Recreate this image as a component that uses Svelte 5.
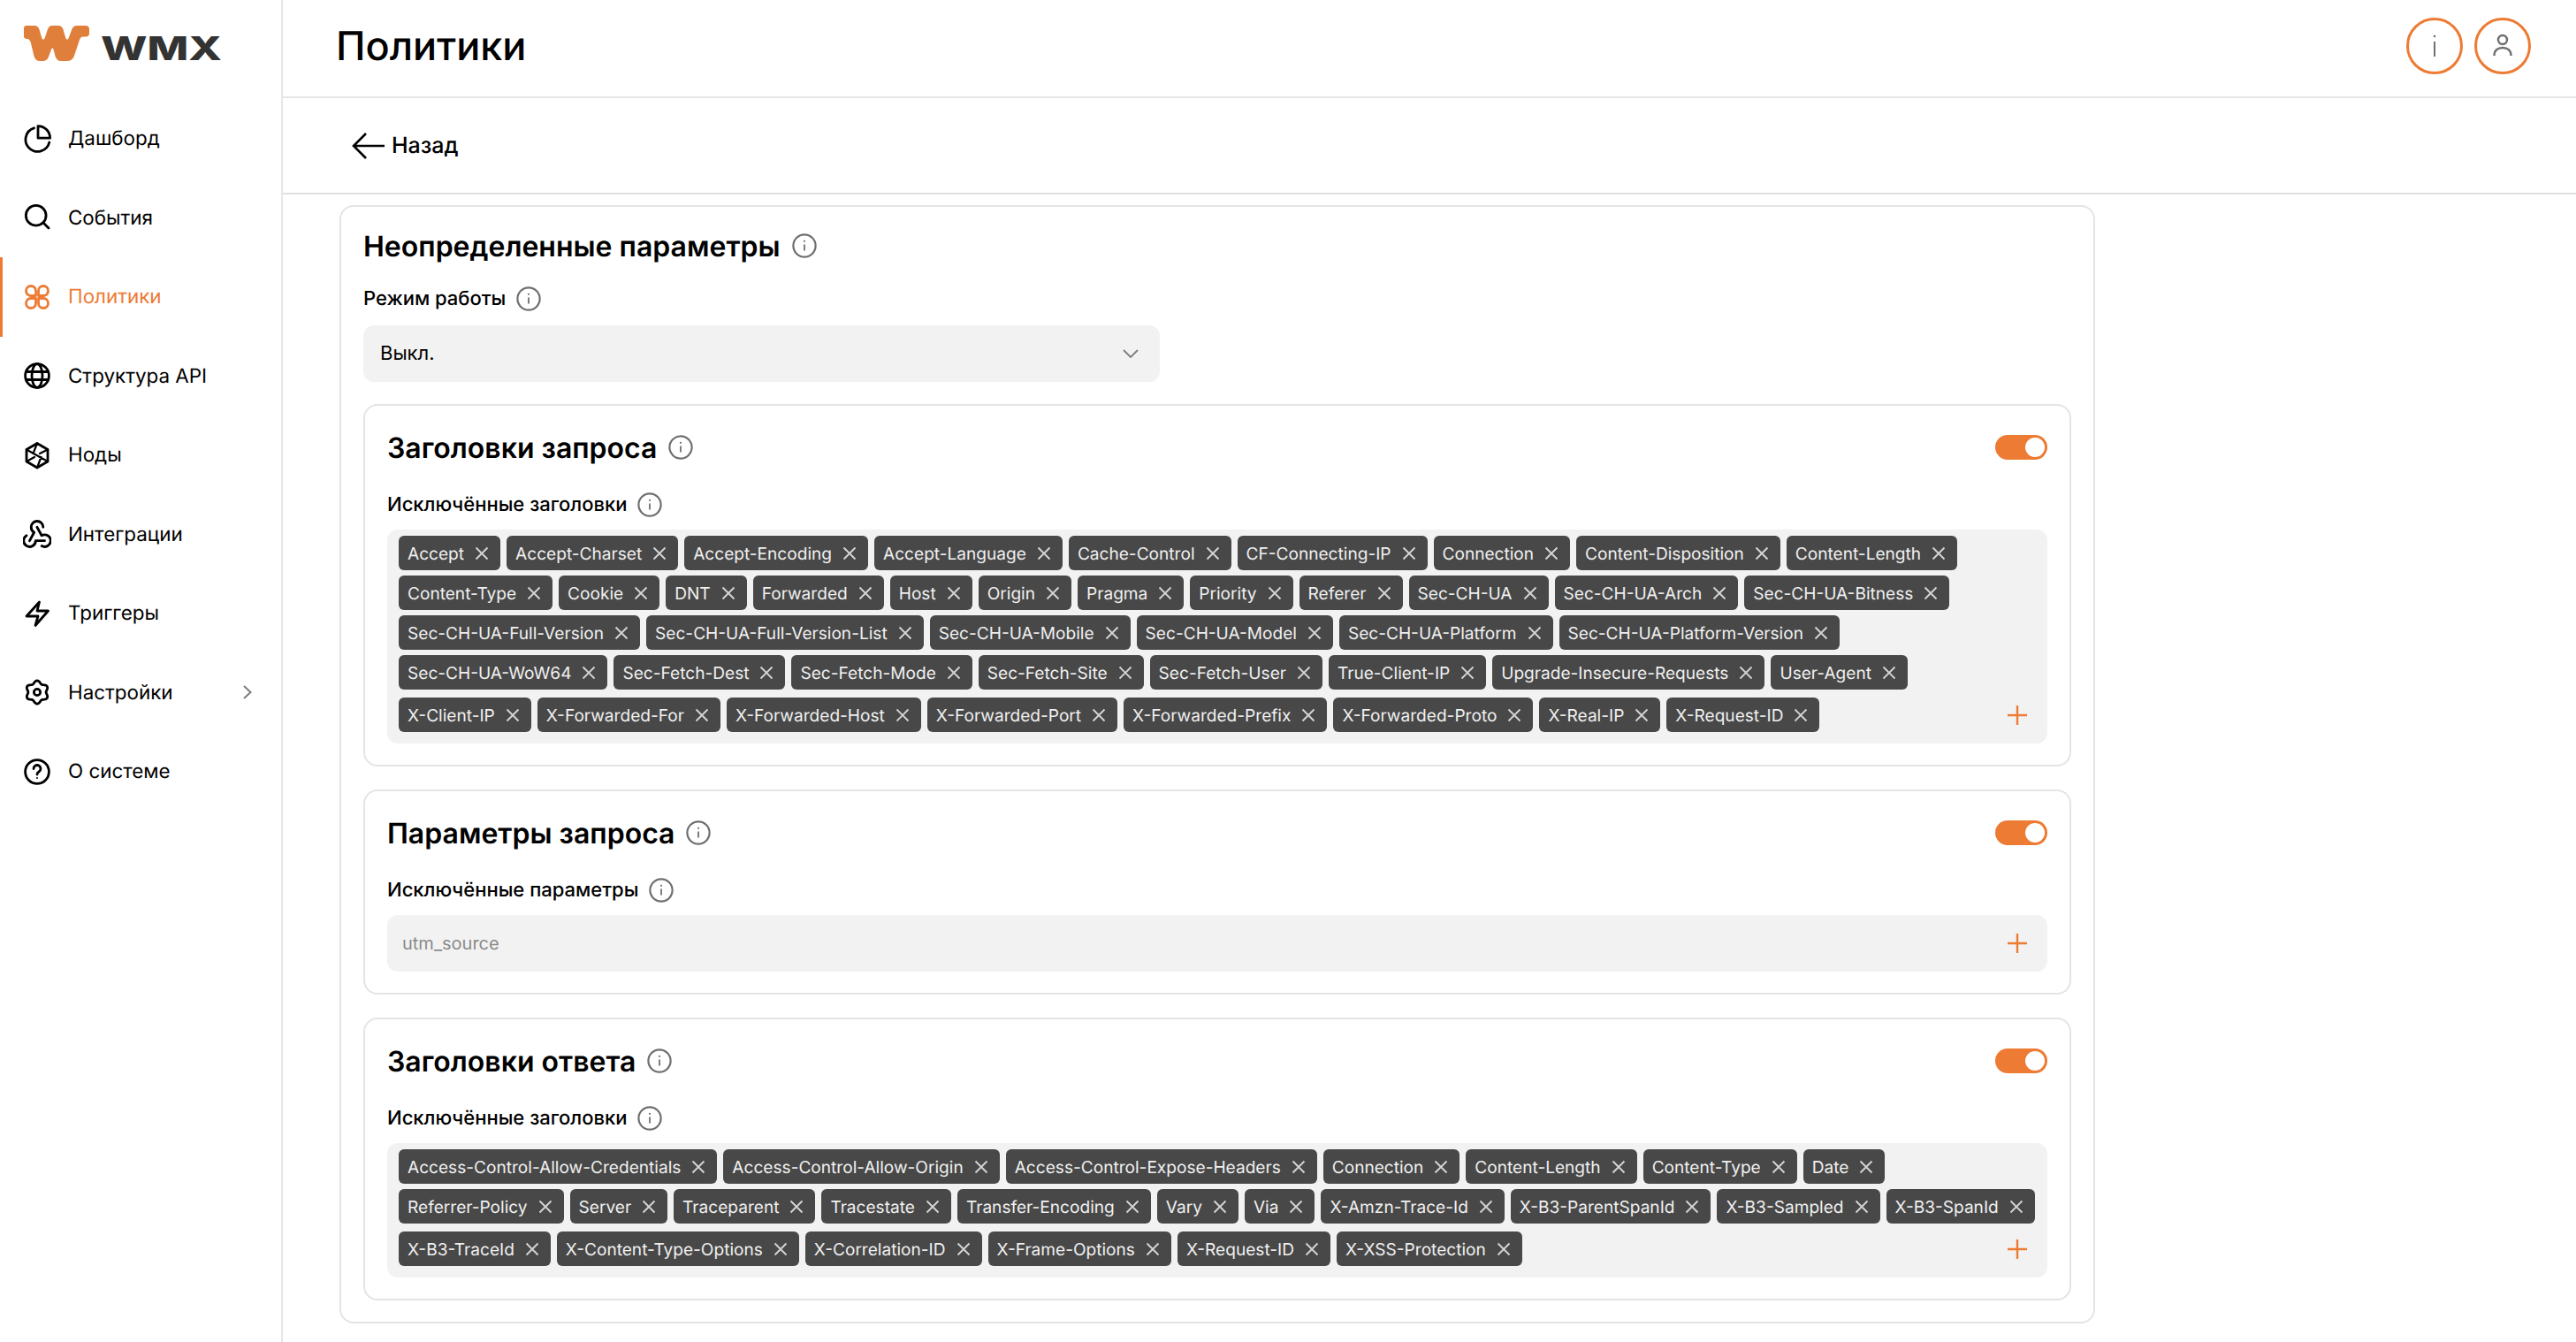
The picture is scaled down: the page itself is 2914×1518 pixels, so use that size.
<script>
	const requestHeaders = [
		'Accept', 'Accept-Charset', 'Accept-Encoding', 'Accept-Language', 'Cache-Control', 'CF-Connecting-IP', 'Connection', 'Content-Disposition', 'Content-Length',
		'Content-Type', 'Cookie', 'DNT', 'Forwarded', 'Host', 'Origin', 'Pragma', 'Priority', 'Referer', 'Sec-CH-UA', 'Sec-CH-UA-Arch', 'Sec-CH-UA-Bitness',
		'Sec-CH-UA-Full-Version', 'Sec-CH-UA-Full-Version-List', 'Sec-CH-UA-Mobile', 'Sec-CH-UA-Model', 'Sec-CH-UA-Platform', 'Sec-CH-UA-Platform-Version',
		'Sec-CH-UA-WoW64', 'Sec-Fetch-Dest', 'Sec-Fetch-Mode', 'Sec-Fetch-Site', 'Sec-Fetch-User', 'True-Client-IP', 'Upgrade-Insecure-Requests', 'User-Agent',
		'X-Client-IP', 'X-Forwarded-For', 'X-Forwarded-Host', 'X-Forwarded-Port', 'X-Forwarded-Prefix', 'X-Forwarded-Proto', 'X-Real-IP', 'X-Request-ID'
	];
	const responseHeaders = [
		'Access-Control-Allow-Credentials', 'Access-Control-Allow-Origin', 'Access-Control-Expose-Headers', 'Connection', 'Content-Length', 'Content-Type', 'Date',
		'Referrer-Policy', 'Server', 'Traceparent', 'Tracestate', 'Transfer-Encoding', 'Vary', 'Via', 'X-Amzn-Trace-Id', 'X-B3-ParentSpanId', 'X-B3-Sampled', 'X-B3-SpanId',
		'X-B3-TraceId', 'X-Content-Type-Options', 'X-Correlation-ID', 'X-Frame-Options', 'X-Request-ID', 'X-XSS-Protection'
	];
	const nav = [
		{ label: 'Дашборд', icon: 'pie' },
		{ label: 'События', icon: 'search' },
		{ label: 'Политики', icon: 'policy', active: true },
		{ label: 'Структура API', icon: 'globe' },
		{ label: 'Ноды', icon: 'nodes' },
		{ label: 'Интеграции', icon: 'hook' },
		{ label: 'Триггеры', icon: 'bolt' },
		{ label: 'Настройки', icon: 'gear', more: true },
		{ label: 'О системе', icon: 'help' }
	];

	// wavy six-lobed outline for the settings icon
	const gearPoints = Array.from({ length: 72 }, (_, i) => {
		const a = (i / 72) * Math.PI * 2;
		const r = 11.6 + 1.5 * Math.cos(6 * a);
		return `${(16 + r * Math.sin(a)).toFixed(2)},${(16 - r * Math.cos(a)).toFixed(2)}`;
	}).join(' ');
</script>

{#snippet info()}
	<svg class="info" viewBox="0 0 28 28" fill="none" stroke="#6f6f6f" stroke-width="2.2">
		<circle cx="14" cy="14" r="12.6" />
		<path d="M14 12.5v7" stroke-width="1.8" />
		<circle cx="14" cy="8.8" r="1.1" fill="#6f6f6f" stroke="none" />
	</svg>
{/snippet}

{#snippet tag(name)}
	<span class="tag">
		{name}
		<svg viewBox="0 0 16 16" fill="none" stroke="#d4d4d4" stroke-width="1.9"><path d="M1.5 1.5l13 13M14.5 1.5l-13 13" /></svg>
	</span>
{/snippet}

{#snippet plus()}
	<svg class="plus" viewBox="0 0 24 24" fill="none" stroke="#ed7b34" stroke-width="2.4"><path d="M12 1v22M1 12h22" /></svg>
{/snippet}

{#snippet icon(name)}
	<svg class="nav-icon" viewBox="0 0 32 32" fill="none" stroke="currentColor" stroke-width="2.8" stroke-linecap="round" stroke-linejoin="round">
		{#if name === 'pie'}
			<path d="M12.5 3.8A13.6 13.6 0 1 0 29.8 20" />
			<path d="M17 1.6A13.6 13.6 0 0 1 30.6 15.2H17Z" />
		{:else if name === 'search'}
			<circle cx="14.7" cy="13.7" r="11.4" />
			<path d="M23 22l6 6" />
		{:else if name === 'policy'}
			<path d="M14.5 14.5H9a5.5 5.5 0 1 1 5.5-5.5Z" />
			<path d="M17.5 14.5V9a5.5 5.5 0 1 1 5.5 5.5Z" />
			<path d="M14.5 17.5V23a5.5 5.5 0 1 1-5.5-5.5Z" />
			<path d="M17.5 17.5H23a5.5 5.5 0 1 1-5.5 5.5Z" />
		{:else if name === 'globe'}
			<circle cx="16" cy="16" r="13.4" />
			<ellipse cx="16" cy="16" rx="6" ry="13.4" />
			<path d="M3.5 11.5h25M3.5 20.5h25" />
		{:else if name === 'nodes'}
			<path d="M16 2.5l12 7v13.5l-12 7-12-7V9.5Z" />
			<path d="M16 2.5L11.5 14M4 9.5L28 23M16 30l4.5-12M28 9.5L19 14M4 23l9-5" stroke-width="2.2" />
		{:else if name === 'hook'}
			<g transform="translate(-4.4 -5.25) scale(1.7)" stroke-width="1.7">
				<path d="M4.876 13.61a4 4 0 1 0 6.124 3.39h6" />
				<path d="M15.066 20.502a4 4 0 1 0 1.934-7.502c-.706 0-1.424.179-2 .5l-3-5.5" />
				<path d="M16 8a4 4 0 1 0-8 0c0 1.506.77 2.818 2 3.5l-3 5.5" />
			</g>
		{:else if name === 'bolt'}
			<path d="M18.5 3L4 19H17L14 29.5L28.5 13H16Z" />
		{:else if name === 'gear'}
			<polygon points={gearPoints} />
			<circle cx="16" cy="16" r="3.6" />
		{:else if name === 'help'}
			<circle cx="16" cy="16" r="13.4" />
			<path d="M12 12.5a4 4 0 1 1 6 3.5c-1.5.9-2 1.5-2 3" />
			<circle cx="16" cy="23" r="1" fill="currentColor" stroke="none" />
		{/if}
	</svg>
{/snippet}

<div class="app">
	<aside class="sidebar">
		<div class="logo">
			<svg class="logo-mark" viewBox="0 0 74 40">
				<path d="M3 0H12C15 0 16.5 1.5 17.5 4.5L20 13C21 16.5 23 16.5 24 13L27 4C28 1.5 29.5 0 32 0H39C42 0 43.5 1.5 44.5 4.5L47 13C48 16.5 50 16.5 51 13L54 5C55 1.5 57 0 60 0H70C72.5 0 74 1.5 74 4V9C74 11 72.5 12.5 70 12.5H67C65 12.5 64 13.5 63 16L57 34C55.5 38 53 40 49 40H42C38.5 40 36.5 38 35.5 34.5L33.5 27C33 25 31.5 25 31 27L28 35C27 38 25 40 21 40H18C14.5 40 12.5 38 11.5 34.5L8 20C7.5 17 6 15 3.5 15H3C1 15 0 13.5 0 12V3C0 1 1 0 3 0Z" fill="#e07f3b" />
			</svg>
			<svg class="logo-word" viewBox="0 0 137 28"><text x="0" y="27" textLength="137" lengthAdjust="spacingAndGlyphs">WMX</text></svg>
		</div>
		<nav>
			{#each nav as item}
				<div class="nav-item" class:active={item.active}>
					{@render icon(item.icon)}
					<span>{item.label}</span>
					{#if item.more}
						<svg class="more" viewBox="0 0 12 18" fill="none" stroke="#7d7d7d" stroke-width="2"><path d="M2 2l7.5 7-7.5 7" /></svg>
					{/if}
				</div>
			{/each}
		</nav>
	</aside>

	<main>
		<header class="topbar">
			<h1>Политики</h1>
			<div class="actions">
				<button class="round" aria-label="Справка">
					<svg viewBox="0 0 24 28" fill="none" stroke="#6f6f6f" stroke-width="2"><circle cx="12" cy="3" r="1.3" fill="#6f6f6f" stroke="none" /><path d="M12 9v17" /></svg>
				</button>
				<button class="round" aria-label="Профиль">
					<svg viewBox="0 0 24 28" fill="none" stroke="#6f6f6f" stroke-width="2.4"><circle cx="12" cy="7" r="5" /><path d="M2.5 25c0-6 4-9 9.5-9s9.5 3 9.5 9" /></svg>
				</button>
			</div>
		</header>

		<div class="backbar">
			<svg class="arrow" viewBox="0 0 38 32" fill="none" stroke="#000" stroke-width="2.6"><path d="M38 16H3M17 2L3 16l14 14" /></svg>
			<span>Назад</span>
		</div>

		<div class="panel">
			<div class="title-row">
				<h2>Неопределенные параметры</h2>
				{@render info()}
			</div>
			<div class="label-row mode-label">
				<span>Режим работы</span>
				{@render info()}
			</div>
			<div class="select">
				<span>Выкл.</span>
				<svg viewBox="0 0 18 10" fill="none" stroke="#7d7d7d" stroke-width="1.8"><path d="M1 1l8 8 8-8" /></svg>
			</div>

			<section class="card first">
				<div class="title-row">
					<h2>Заголовки запроса</h2>
					{@render info()}
					<div class="toggle"><i></i></div>
				</div>
				<div class="label-row">
					<span>Исключённые заголовки</span>
					{@render info()}
				</div>
				<div class="field">
					{#each requestHeaders as name}{@render tag(name)}{/each}
					<div class="adder">{@render plus()}</div>
				</div>
			</section>

			<section class="card">
				<div class="title-row">
					<h2>Параметры запроса</h2>
					{@render info()}
					<div class="toggle"><i></i></div>
				</div>
				<div class="label-row">
					<span>Исключённые параметры</span>
					{@render info()}
				</div>
				<div class="field empty">
					<div class="adder"><span class="placeholder">utm_source</span>{@render plus()}</div>
				</div>
			</section>

			<section class="card">
				<div class="title-row">
					<h2>Заголовки ответа</h2>
					{@render info()}
					<div class="toggle"><i></i></div>
				</div>
				<div class="label-row">
					<span>Исключённые заголовки</span>
					{@render info()}
				</div>
				<div class="field">
					{#each responseHeaders as name}{@render tag(name)}{/each}
					<div class="adder">{@render plus()}</div>
				</div>
			</section>
		</div>
	</main>
</div>

<style>
	:global(body) {
		margin: 0;
		background: #fff;
	}

	.app {
		display: flex;
		height: 1518px;
		overflow: hidden;
		font-family: Inter, "Noto Sans", sans-serif;
		color: #000;
		text-rendering: geometricPrecision;
	}

	.sidebar {
		flex: 0 0 320px;
		box-sizing: border-box;
		border-right: 2px solid #e6e6e6;
	}

	.logo {
		display: flex;
		align-items: flex-end;
		gap: 13px;
		height: 40px;
		padding: 29px 0 0 27px;
	}

	.logo-mark {
		width: 74px;
		height: 40px;
	}

	.logo-word {
		width: 137px;
		height: 28px;
		overflow: visible;
	}

	.logo-word text {
		font-family: Inter, sans-serif;
		font-weight: 800;
		font-size: 37px;
		fill: #333;
	}

	nav {
		margin-top: 43px;
	}

	.nav-item {
		position: relative;
		display: flex;
		align-items: center;
		gap: 19px;
		height: 89.5px;
		padding-left: 26px;
		font-size: 22.4px;
	}

	.nav-item.active {
		color: #ed7b34;
		box-shadow: inset 3px 0 0 #ed7b34;
	}

	.nav-icon {
		width: 32px;
		height: 32px;
		flex: none;
	}

	.more {
		position: absolute;
		left: 274px;
		width: 12px;
		height: 18px;
	}

	main {
		flex: 1;
		min-width: 0;
	}

	.topbar {
		display: flex;
		align-items: center;
		justify-content: space-between;
		box-sizing: border-box;
		height: 111px;
		padding: 0 51px 6px 60px;
		border-bottom: 2px solid #e6e6e6;
	}

	h1 {
		margin: 0;
		font-size: 45px;
		font-weight: 500;
	}

	.actions {
		display: flex;
		gap: 13px;
	}

	.round {
		display: flex;
		align-items: center;
		justify-content: center;
		width: 64px;
		height: 64px;
		padding: 0;
		border: 3px solid #ed7b34;
		border-radius: 50%;
		background: #fff;
	}

	.round svg {
		width: 24px;
		height: 28px;
	}

	.backbar {
		display: flex;
		align-items: center;
		gap: 8px;
		box-sizing: border-box;
		height: 109px;
		padding-left: 77px;
		border-bottom: 2px solid #e0e0e0;
		font-size: 25px;
		font-weight: 500;
	}

	.arrow {
		width: 38px;
		height: 32px;
	}

	.panel {
		box-sizing: border-box;
		width: 1986px;
		margin: 12px 0 0 64px;
		padding: 22px 25px 24px;
		border: 2px solid #e4e4e4;
		border-radius: 16px;
	}

	.title-row {
		display: flex;
		align-items: center;
		gap: 13px;
		height: 44px;
	}

	h2 {
		margin: 0;
		font-size: 32px;
		font-weight: 600;
	}

	.info {
		width: 28px;
		height: 28px;
		flex: none;
	}

	.label-row {
		display: flex;
		align-items: center;
		gap: 12px;
		height: 32px;
		margin-top: 27px;
		font-size: 22px;
		font-weight: 500;
	}

	.mode-label {
		margin-top: 22px;
	}

	.select {
		display: flex;
		align-items: center;
		justify-content: space-between;
		box-sizing: border-box;
		width: 901px;
		height: 64px;
		margin-top: 14px;
		padding: 0 24px 0 19px;
		border-radius: 12px;
		background: #f2f2f2;
		font-size: 22px;
	}

	.select svg {
		width: 18px;
		height: 10px;
	}

	.card {
		box-sizing: border-box;
		margin-top: 26px;
		padding: 25px 25px 24px;
		border: 2px solid #e4e4e4;
		border-radius: 16px;
	}

	.card.first {
		margin-top: 25px;
	}

	.toggle {
		position: relative;
		width: 59px;
		height: 28px;
		margin-left: auto;
		border-radius: 14px;
		background: #ed7b34;
	}

	.toggle i {
		position: absolute;
		top: 3px;
		right: 3px;
		width: 22px;
		height: 22px;
		border-radius: 50%;
		background: #fff;
	}

	.field {
		display: flex;
		flex-wrap: wrap;
		align-items: center;
		gap: 6px 7px;
		margin-top: 12px;
		padding: 7px 9px 10px 13px;
		border-radius: 12px;
		background: #f2f2f2;
	}

	.field.empty {
		padding-top: 9.5px;
		padding-bottom: 9.5px;
	}

	.tag {
		display: inline-flex;
		align-items: center;
		gap: 12px;
		box-sizing: border-box;
		height: 39px;
		padding: 0 13px 0 10px;
		border-radius: 6px;
		background: #484848;
		color: #f0f0f0;
		font-size: 19.1px;
		white-space: nowrap;
	}

	.tag svg {
		width: 16px;
		height: 16px;
	}

	.adder {
		display: flex;
		flex: 1;
		align-items: center;
		justify-content: space-between;
		height: 45px;
	}

	.plus {
		width: 24px;
		height: 24px;
		margin-left: auto;
		margin-right: 13px;
	}

	.placeholder {
		padding-left: 4px;
		color: #8a8a8a;
		font-size: 20px;
	}
</style>
